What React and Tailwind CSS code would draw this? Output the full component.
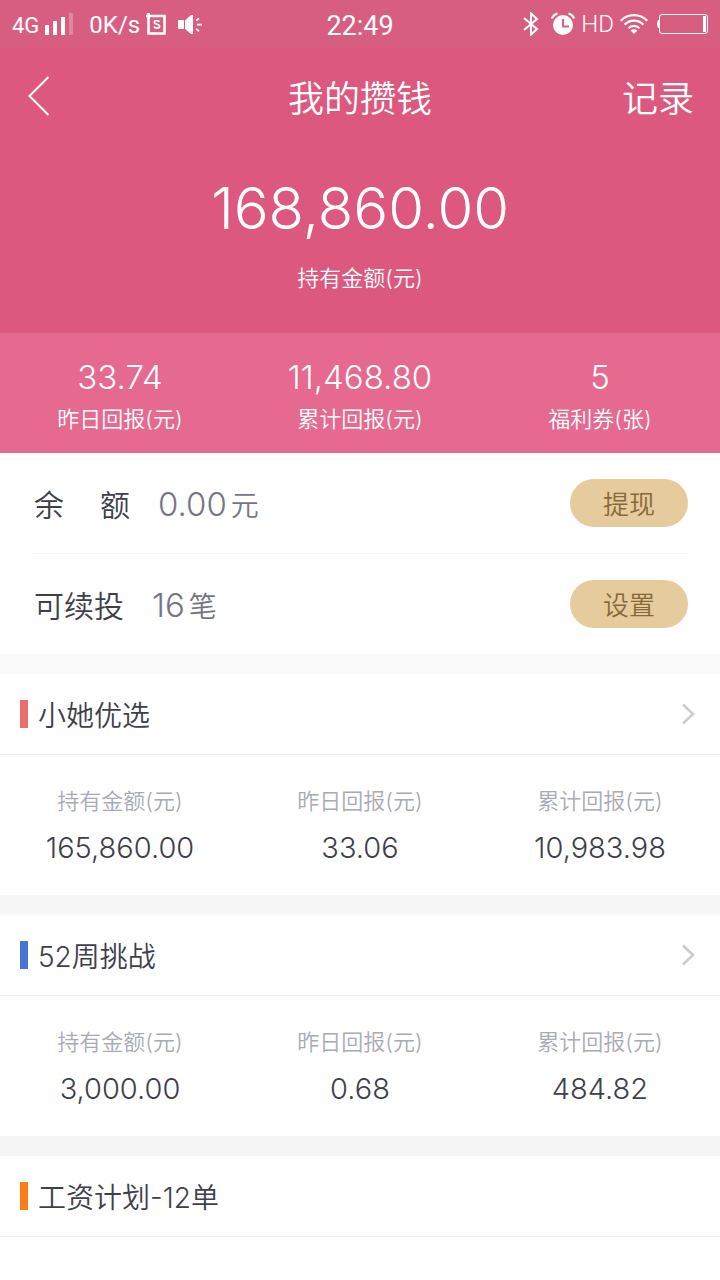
import React from 'react';

const summary = [
  { label: '昨日回报(元)', value: '33.74' },
  { label: '累计回报(元)', value: '11,468.80' },
  { label: '福利券(张)', value: '5' },
];

const plans = [
  {
    name: '小她优选',
    bar: 'bg-[#ed6d6f]',
    gap: 'bg-[#fafafa]',
    arrow: true,
    stats: [
      { label: '持有金额(元)', value: '165,860.00' },
      { label: '昨日回报(元)', value: '33.06' },
      { label: '累计回报(元)', value: '10,983.98' },
    ],
  },
  {
    name: '52周挑战',
    bar: 'bg-[#4876d6]',
    gap: 'bg-[#f7f7f7]',
    arrow: true,
    stats: [
      { label: '持有金额(元)', value: '3,000.00' },
      { label: '昨日回报(元)', value: '0.68' },
      { label: '累计回报(元)', value: '484.82' },
    ],
  },
  { name: '工资计划-12单', bar: 'bg-[#fa7f1b]', gap: 'bg-[#f5f5f5]', arrow: false, stats: [] },
];

const SignalIcon = () => (
  <svg className="w-7 h-6" viewBox="0 0 28 24" fill="#fff">
    <rect x="0" y="13" width="4" height="10" />
    <rect x="8" y="9" width="4" height="14" />
    <rect x="16" y="5" width="4" height="18" />
    <rect x="24" y="1" width="4" height="22" opacity=".25" />
  </svg>
);

const ScreenshotIcon = () => (
  <svg className="w-5 h-6" viewBox="0 0 20 24" fill="none" stroke="#fff">
    <path d="M2.500 1v20.500h16V4H0" strokeWidth="2.600" />
    <path d="M13.400 10c-.4-1-1.300-1.400-2.600-1.400-1.500 0-2.500.6-2.500 1.700 0 2.600 5.300 1.400 5.300 4 0 1.200-1 1.900-2.700 1.900-1.500 0-2.500-.6-2.900-1.700" strokeWidth="1.700" />
  </svg>
);

const SpeakerIcon = () => (
  <svg className="w-6 h-6" viewBox="0 0 24 24" fill="#fff">
    <rect x="0" y="8" width="6" height="9" rx="1" />
    <path d="M7 8.500 13 3h2v19h-2l-6-5z" />
    <path d="M18 8.500l3-2M19 12.700h5M18 17l3 2" stroke="#fff" strokeWidth="1.700" />
  </svg>
);

const BluetoothIcon = () => (
  <svg className="w-4 h-6" viewBox="0 0 16 24" fill="none" stroke="#fff" strokeWidth="2">
    <path d="M1 6l13 11-6 5.500v-21L14 7 1 18" />
  </svg>
);

const AlarmIcon = () => (
  <svg className="w-6 h-6" viewBox="0 0 24 24">
    <circle cx="12" cy="13" r="10" fill="#fff" />
    <path d="M1 6.500C1.800 4 3.800 2.200 6.500 1.600M23 6.500c-.8-2.500-2.800-4.300-5.500-4.900" fill="none" stroke="#fff" strokeWidth="2.200" />
    <path d="M12 7v7.500h6" fill="none" stroke="#d85e81" strokeWidth="2" />
  </svg>
);

const WifiIcon = () => (
  <svg className="w-7 h-5" viewBox="0 0 28 20" fill="none" stroke="#fff" strokeWidth="2.200">
    <path d="M.8 6.800C8-.8 20-.8 27.200 6.800M4.600 10.600c5.400-5.400 13.400-5.400 18.800 0M8.500 14.200c3.200-3.100 7.800-3.100 11 0" />
    <path d="M14 20l-3.400-3.600c1.800-1.700 5-1.700 6.800 0z" fill="#fff" stroke="none" />
  </svg>
);

const BatteryIcon = () => (
  <svg className="w-[52px] h-5" viewBox="0 0 52 20" fill="none">
    <path d="M3 6H2Q0 10 2 14h1z" fill="#fff" />
    <rect x="3.500" y=".5" width="48" height="19" rx="2.500" stroke="#fff" />
    <rect x="47" y="2" width="3" height="16" fill="#fff" />
  </svg>
);

const StatusBar = () => (
  <div className="h-12 px-3 grid grid-cols-[1fr_auto_1fr] items-center bg-[#d85e81] font-normal font-['Roboto',sans-serif]">
    <div className="flex items-center">
      <span className="text-[22px] leading-6 pt-1">4G</span>
      <span className="ml-[6px] mr-4"><SignalIcon /></span>
      <span className="text-2xl pt-[2px] mr-[6px]">0K/s</span>
      <ScreenshotIcon />
      <span className="ml-3"><SpeakerIcon /></span>
    </div>
    <span className="text-[27px] leading-8 pt-1">22:49</span>
    <div className="flex items-center justify-end">
      <BluetoothIcon />
      <span className="ml-3 mr-[6px]"><AlarmIcon /></span>
      <span className="mr-[6px] text-2xl font-light">HD</span>
      <WifiIcon />
      <span className="ml-2"><BatteryIcon /></span>
    </div>
  </div>
);

const Row = ({ children, action }) => (
  <div className="h-[100px] flex items-center justify-between">
    <p className="pt-1 flex items-baseline text-[30px] text-[#3e3f4a]">{children}</p>
    <button type="button" className="w-[118px] h-12 pt-[2px] rounded-full bg-[#e6cc9c] text-[#86693b] text-[26px]">
      {action}
    </button>
  </div>
);

const Plan = ({ plan }) => (
  <section>
    <div className={`h-5 ${plan.gap}`} />
    <div className="h-[81px] pl-5 pr-6 flex items-center border-b border-[#efeff0]">
      <span className={`w-2 h-7 mr-[10px] ${plan.bar}`} />
      <h2 className="flex-1 text-[28px] leading-10 pt-1">{plan.name}</h2>
      {plan.arrow && (
        <svg className="w-4 h-6" viewBox="0 0 16 24" fill="none" stroke="#cbccd0" strokeWidth="2.600">
          <path d="M3 2.500l10 9.500L3 21.500" />
        </svg>
      )}
    </div>
    {plan.stats.length > 0 && (
      <div className="h-[140px] pt-7 grid grid-cols-3 text-center">
        {plan.stats.map((s) => (
          <div key={s.label}>
            <p className="text-[22px] leading-9 text-[#a9aab6]">{s.label}</p>
            <p className="text-[29px] leading-[42px] mt-2">{s.value}</p>
          </div>
        ))}
      </div>
    )}
  </section>
);

const App = () => (
  <div className="min-h-screen bg-white text-[#3e3f4a] font-[350] font-['Inter','Noto_Sans_CJK_SC',sans-serif]">
    <header className="bg-[#dc587e] text-white">
      <StatusBar />
      <nav className="h-24 px-[26px] grid grid-cols-[1fr_auto_1fr] items-center text-[36px]">
        <button type="button" aria-label="返回" className="justify-self-start">
          <svg className="w-6 h-10" viewBox="0 0 24 40" fill="none" stroke="#fff" strokeWidth="2">
            <path d="M22.500 1L3.500 20l19 19" />
          </svg>
        </button>
        <h1 className="pt-[6px]">我的攒钱</h1>
        <button type="button" className="pt-[6px] justify-self-end">记录</button>
      </nav>
      <div className="h-[189px] pt-7 text-center">
        <p className="text-[58px] leading-[72px]">168,860.00</p>
        <p className="text-[22px] leading-9 mt-4">持有金额(元)</p>
      </div>
      <div className="h-[120px] pt-6 grid grid-cols-3 text-center bg-[#e6698f]">
        {summary.map((s) => (
          <div key={s.label}>
            <p className="text-[33px] leading-10">{s.value}</p>
            <p className="text-[22px] leading-9 mt-1">{s.label}</p>
          </div>
        ))}
      </div>
    </header>

    <main>
      <div className="px-8">
        <Row action="提现">
          <span className="ml-[2px] mr-7 flex gap-9"><span>余</span><span>额</span></span>
          <span className="text-[33px] text-[#757682]">0.00</span>
          <span className="ml-1 text-[28px] text-[#757682]">元</span>
        </Row>
        <div className="h-px bg-[#f5f5f6]" />
        <Row action="设置">
          <span className="ml-[2px] mr-7">可续投</span>
          <span className="text-[33px] text-[#757682]">16</span>
          <span className="ml-1 text-[28px] text-[#757682]">笔</span>
        </Row>
      </div>
      {plans.map((plan) => (
        <Plan key={plan.name} plan={plan} />
      ))}
    </main>
  </div>
);

export default App;
